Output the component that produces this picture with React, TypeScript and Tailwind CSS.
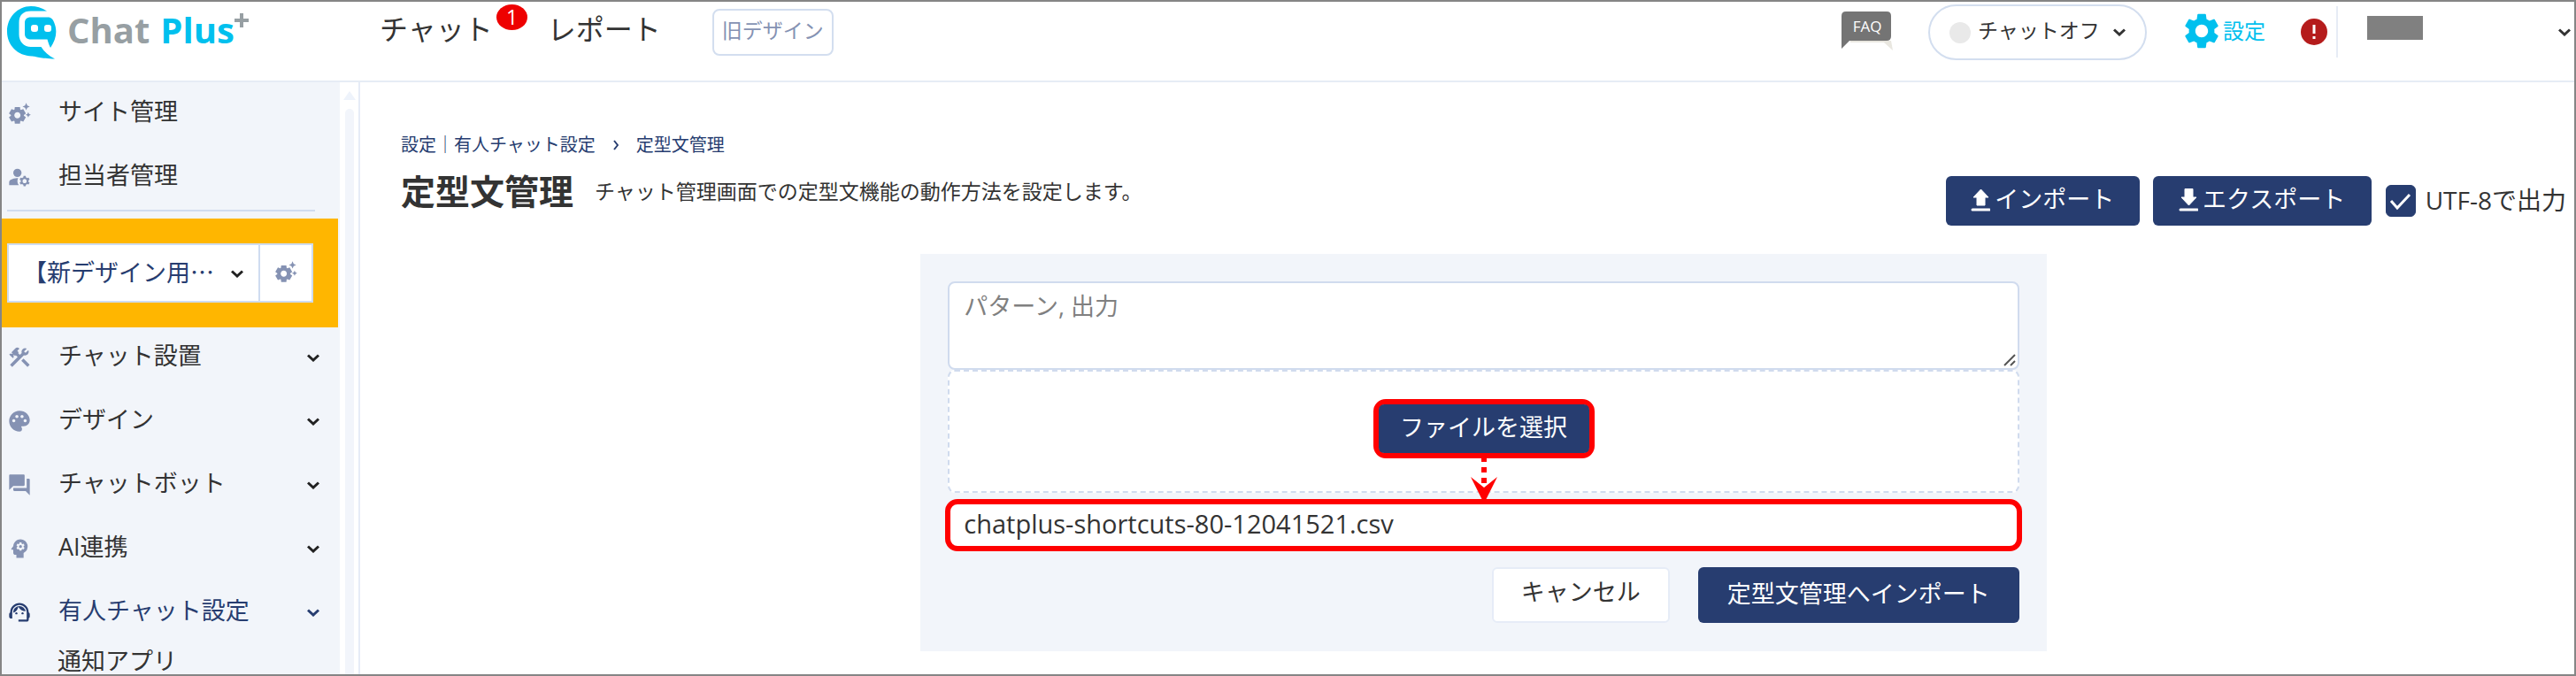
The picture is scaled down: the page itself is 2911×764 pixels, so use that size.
import { useState } from "react";
import type { ComponentType, ReactNode } from "react";
import {
  MdConstruction,
  MdForum,
  MdManageAccounts,
  MdPalette,
  MdPsychology,
  MdSettings,
  MdSettingsSuggest,
  MdSupportAgent,
} from "react-icons/md";

type MenuItem = {
  label: string;
  icon: ComponentType<{ className?: string }>;
  active?: boolean;
};

const topMenu: MenuItem[] = [
  { label: "サイト管理", icon: MdSettingsSuggest },
  { label: "担当者管理", icon: MdManageAccounts },
];

const siteMenu: MenuItem[] = [
  { label: "チャット設置", icon: MdConstruction },
  { label: "デザイン", icon: MdPalette },
  { label: "チャットボット", icon: MdForum },
  { label: "AI連携", icon: MdPsychology },
  { label: "有人チャット設定", icon: MdSupportAgent, active: true },
];

const Chevron = ({ className = "" }: { className?: string }) => (
  <svg viewBox="0 0 14 9" className={`w-[14px] h-[9px] shrink-0 ${className}`} fill="none" stroke="currentColor" strokeWidth="3">
    <path d="M1 1.5 7 7 13 1.5" />
  </svg>
);

const Logo = () => (
  <a href="#" className="flex items-start w-[421px] shrink-0 pt-[5px]" aria-label="Chat Plus">
    <svg viewBox="0 0 56 60" className="w-[56px] h-[60px] shrink-0">
      <path
        fill="#00c0ee"
        d="M45 5.500C39 1.500 33 0 27 0 12 0 0 12.500 0 28.500S12 56 28 56.500C33 57 37 59 54 59.500 47 56 42 51.500 38.500 46H27C19 46 13.500 40 13.500 32V19C13.500 10 18 5.500 27 5.500Z"
      />
      <path
        fill="#00c0ee"
        d="M27 12.500H46C50 12.500 52 15 53 18 57 27 56 37 49 47 47.500 44 46.500 41 45.500 37.500H27C22 37.500 20 35 20 31V19C20 15 22 12.500 27 12.500Z"
      />
      <rect x="27" y="21" width="8" height="8" rx="3" fill="#fff" />
      <rect x="42" y="21" width="8" height="8" rx="3" fill="#fff" />
    </svg>
    <span className="ml-3 mt-[2px] font-['Open_Sans'] font-bold text-[40px] leading-[50px] text-[#979fa3]">Chat</span>
    <span className="ml-3 mt-[2px] font-['Open_Sans'] font-bold text-[40px] leading-[50px] text-[#00c0ee]">Plus</span>
    <svg viewBox="0 0 16 16" className="w-4 h-4 mt-2" stroke="#979fa3" strokeWidth="4">
      <path d="M8 0V16M0 8H16" />
    </svg>
  </a>
);

const FaqIcon = () => (
  <a href="#" className="relative block w-[58px] h-[44px] shrink-0">
    <svg viewBox="0 0 58 44" className="w-[58px] h-[44px]">
      <path d="M40 33H56L58 44 48 35H10V33Z" fill="#e9e7e0" />
      <path d="M5 0H51Q56 0 56 5V28Q56 33 51 33H9L0 42V5Q0 0 5 0Z" fill="#747474" />
    </svg>
    <span className="absolute inset-x-0 top-[5px] text-center text-white text-[17px] leading-6">FAQ</span>
  </a>
);

const PrimaryButton = ({ children, className = "" }: { children: ReactNode; className?: string }) => (
  <button type="button" className={`flex items-center justify-center rounded-md bg-[#273d70] pb-[3px] text-white text-[27px] ${className}`}>
    {children}
  </button>
);

const ArrowIcon = ({ down = false }: { down?: boolean }) => (
  <svg viewBox="0 0 22 28" className="w-[22px] h-[28px] mr-[5px] shrink-0" fill="#fff" stroke="#fff" strokeLinejoin="round">
    <path d={down ? "M7 1.500H16V11H20L11.500 20 3 11H7Z" : "M11.500 2 20 11H16V20H7V11H3Z"} />
    <path d="M2 25H21" strokeWidth="3" strokeLinecap="round" />
  </svg>
);

const SideRow = ({ item, expandable = false }: { item: MenuItem; expandable?: boolean }) => {
  const Icon = item.icon;
  return (
    <li>
      <a href="#" className={`flex items-center h-[72px] pl-[6px] pr-[23px] text-[27px] ${item.active ? "text-[#273d70]" : "text-[#333]"}`}>
        <Icon className={`w-7 h-7 mt-1 mr-[30px] shrink-0 ${item.active ? "" : "text-[#8592b3]"}`} />
        <span className="flex-1">{item.label}</span>
        {expandable && <Chevron className={item.active ? "mt-[5px]" : "mt-[5px] text-[#222]"} />}
      </a>
    </li>
  );
};

const Sidebar = () => (
  <div className="flex shrink-0 w-[405px] border-r-2 border-[#e6ecf7]">
    <nav className="w-[382px] bg-[#f2f5fa] overflow-hidden">
      <ul className="-mt-[3px] pb-[3px]">
        {topMenu.map((item) => (
          <SideRow key={item.label} item={item} />
        ))}
      </ul>
      <hr className="ml-[6px] mr-[28px] border-t-2 border-[#cfdcf0]" />
      <div className="mt-2 mr-[2px] pl-[6px] pr-[28px] py-7 bg-[#ffb600]">
        <div className="flex h-[67px] border-2 border-[#cfdcf0] bg-white">
          <button type="button" className="flex flex-1 items-center pl-4 pr-[17px] pb-[3px] text-[27px] text-[#273d70]">
            <span className="flex-1 text-left whitespace-nowrap font-['Noto_Sans_CJK_JP',sans-serif]">【新デザイン用…</span>
            <Chevron className="mt-1 text-[#222]" />
          </button>
          <button type="button" aria-label="サイト設定" className="flex items-center justify-center w-[60px] pb-1 border-l-2 border-[#cfdcf0]">
            <MdSettingsSuggest className="w-7 h-7 text-[#8592b3]" />
          </button>
        </div>
      </div>
      <ul className="-mt-1">
        {siteMenu.map((item) => (
          <SideRow key={item.label} item={item} expandable />
        ))}
      </ul>
      <a href="#" className="block pt-[6px] pl-[63px] text-[27px] leading-[30px] text-[#333]">通知アプリ</a>
    </nav>
    <div className="flex flex-1 flex-col items-center pt-[10px]">
      <svg viewBox="0 0 14 10" className="w-[14px] h-[10px]" fill="#eef3fb">
        <path d="M7 0 14 10H0Z" />
      </svg>
      <div className="mt-[10px] w-[10px] flex-1 rounded-t-full bg-[#f2f5fb]" />
    </div>
  </div>
);

const Header = () => (
  <header className="flex items-start shrink-0 h-[91px] pl-[6px] border-b-2 border-[#e6ecf5]">
    <Logo />
    <a href="#" className="relative mt-2 mr-[62px] text-[32px] leading-[46px]">
      チャット
      <span className="absolute left-[132px] -top-[5px] flex items-center justify-center w-[35px] h-[29px] rounded-[50%] bg-[#ee0000] text-white text-[23px] leading-none">
        1
      </span>
    </a>
    <a href="#" className="mt-2 text-[32px] leading-[46px]">レポート</a>
    <a href="#" className="flex items-center mt-2 ml-[58px] h-[53px] px-[9px] pb-1 rounded-lg border-2 border-[#d3deef] text-[23px] text-[#8592b3]">
      旧デザイン
    </a>
    <div className="flex items-start ml-auto">
      <div className="mt-[11px] mr-[40px]">
        <FaqIcon />
      </div>
      <button type="button" className="flex items-center mt-[3px] w-[247px] h-[63px] pl-[22px] rounded-full border-2 border-[#d3deef] text-[23px]">
        <span className="w-6 h-6 mr-2 rounded-full bg-[#e9e9e9]" />
        <span className="-mt-1">チャットオフ</span>
        <Chevron className="ml-[15px]" />
      </button>
      <a href="#" className="flex items-center mt-[7px] ml-[38px] h-[52px] text-[24px] text-[#00c0ee]">
        <MdSettings className="w-12 h-12" />
        設定
      </a>
      <svg viewBox="0 0 30 30" className="w-[30px] h-[30px] mt-[19px] ml-[40px]">
        <circle cx="15" cy="15" r="15" fill="#b51c1c" />
        <path d="M15 7V17M15 20V23" stroke="#fff" strokeWidth="3" />
      </svg>
      <div className="mt-[5px] ml-[10px] w-[2px] h-[58px] bg-[#e6ecf5]" />
      <div className="mt-4 ml-[33px] w-[63px] h-[27px] bg-[#808080]" />
      <Chevron className="mt-[30px] ml-[153px] mr-[4px]" />
    </div>
  </header>
);

const ImportPanel = () => {
  const [text, setText] = useState<string>("");

  return (
    <section className="w-[52%] mx-auto mt-8 pt-[31px] px-[31px] pb-8 bg-[#f2f5fa]">
      <div className="relative">
        <textarea
          aria-label="パターン, 出力"
          placeholder="パターン, 出力"
          value={text}
          onChange={(e) => setText(e.target.value)}
          className="block w-full h-[100px] px-4 py-[6px] resize-none rounded-lg border-2 border-[#d0dbee] bg-white text-[27px] leading-10 placeholder:text-[#808080]"
        />
        <svg viewBox="0 0 14 14" className="absolute right-1 bottom-1 w-[14px] h-[14px]" stroke="#555" strokeWidth="2">
          <path d="M1 13 13 1M8 13 13 8" />
        </svg>
      </div>
      <div className="relative flex items-start justify-center h-[139px] pt-[31px] rounded-lg border-2 border-dashed border-[#d0dbee] bg-white">
        <div className="rounded-[14px] border-6 border-[#ff0000]">
          <PrimaryButton className="w-[238px] h-[55px]">ファイルを選択</PrimaryButton>
        </div>
        <svg viewBox="0 0 30 52" className="absolute left-1/2 -ml-[15px] top-[97px] w-[30px] h-[52px] z-10">
          <path d="M15 0V32" stroke="#f00" strokeWidth="6" strokeDasharray="6 6" strokeDashoffset="1" />
          <path d="M0 22 15 34 30 22 15 52Z" fill="#f00" />
        </svg>
      </div>
      <div className="-mx-[3px] mt-[7px] h-[59px] px-[15px] rounded-[14px] border-6 border-[#ff0000] bg-white text-[29px] leading-[44px]">
        chatplus-shortcuts-80-12041521.csv
      </div>
      <div className="flex justify-end gap-8 mt-[18px]">
        <button type="button" className="h-[63px] px-[31px] pb-[6px] rounded-md border-2 border-[#e6ecf7] bg-white text-[27px]">
          キャンセル
        </button>
        <PrimaryButton className="h-[63px] px-[33px]">定型文管理へインポート</PrimaryButton>
      </div>
    </section>
  );
};

const Main = () => {
  const [utf8, setUtf8] = useState<boolean>(true);

  return (
    <main className="flex-1 pl-[46px] pr-[9px] pt-[56px]">
      <nav className="flex items-center text-[20px] leading-[30px] text-[#273d70]">
        <a href="#">設定｜有人チャット設定</a>
        <svg viewBox="0 0 6 12" className="w-[6px] h-3 mx-[20px]" fill="none" stroke="currentColor" strokeWidth="2">
          <path d="M1 1 5 6 1 11" />
        </svg>
        <a href="#">定型文管理</a>
      </nav>
      <div className="flex items-start justify-between">
        <div className="flex items-center mt-3">
          <h1 className="text-[39px] leading-[50px] font-bold">定型文管理</h1>
          <p className="ml-6 text-[23px]">チャット管理画面での定型文機能の動作方法を設定します。</p>
        </div>
        <div className="flex items-center mt-5">
          <PrimaryButton className="w-[219px] h-[56px]">
            <ArrowIcon />
            インポート
          </PrimaryButton>
          <PrimaryButton className="w-[247px] h-[56px] ml-[15px]">
            <ArrowIcon down />
            エクスポート
          </PrimaryButton>
          <label className="flex items-center ml-4 text-[28px]">
            <span className="relative mr-[11px] w-[34px] h-[36px]">
              <input
                type="checkbox"
                checked={utf8}
                onChange={(e) => setUtf8(e.target.checked)}
                className="block w-full h-full appearance-none rounded-md border border-[#273d70] checked:bg-[#273d70]"
              />
              {utf8 && (
                <svg viewBox="0 0 34 36" className="absolute inset-0 pointer-events-none" fill="none" stroke="#fff" strokeWidth="3">
                  <path d="M6 18 13 26 27 11" />
                </svg>
              )}
            </span>
            <span className="pb-[3px]">UTF-8で出力</span>
          </label>
        </div>
      </div>
      <ImportPanel />
    </main>
  );
};

const App = () => (
  <div className="flex flex-col h-screen overflow-hidden border-2 border-[#858585] bg-white text-[#333] font-['Open_Sans','Noto_Sans_CJK_JP',sans-serif]">
    <Header />
    <div className="flex flex-1 min-h-0">
      <Sidebar />
      <Main />
    </div>
  </div>
);

export default App;
